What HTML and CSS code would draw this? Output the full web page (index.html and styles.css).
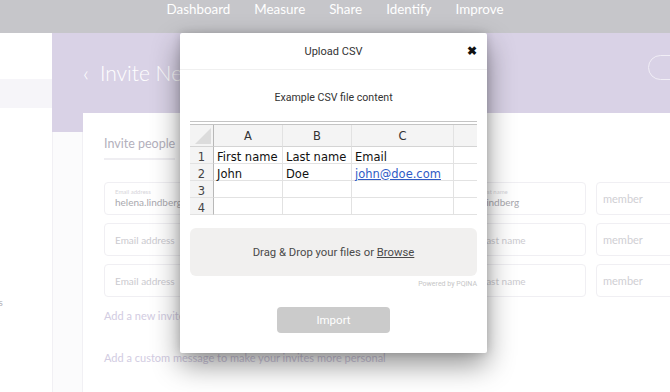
FILE: index.html
```html
<!DOCTYPE html>
<html>
<head>
    <title>Invite people</title>
    <link rel="stylesheet" href="styles.css">
</head>
<body>
    <nav class="topnav">
        <a class="nav-link">Dashboard</a>
        <a class="nav-link">Measure</a>
        <a class="nav-link">Share</a>
        <a class="nav-link">Identify</a>
        <a class="nav-link">Improve</a>
    </nav>
    <div class="layout">
        <aside class="sidebar">
            <div class="side-band"></div>
            <div class="side-item">Invites</div>
        </aside>
        <main class="main">
            <header class="hero">
                <div class="hero-title"><span class="chev">&lsaquo;</span>Invite New People</div>
                <div class="hero-btn"></div>
            </header>
            <div class="body-row">
                <div class="gutter"></div>
                <section class="card">
                    <div class="tabs"><span class="tab">Invite people</span></div>
                    <div class="invite-grid">
                        <div class="field filled"><span class="field-label">Email address</span><span class="field-value">helena.lindberg@ekko.se</span></div>
                        <div class="field filled"><span class="field-label">First name</span><span class="field-value">Helena</span></div>
                        <div class="field filled"><span class="field-label">Last name</span><span class="field-value">Lindberg</span></div>
                        <div class="field role">member</div>

                        <div class="field">Email address</div>
                        <div class="field">First name</div>
                        <div class="field">Last name</div>
                        <div class="field role">member</div>

                        <div class="field">Email address</div>
                        <div class="field">First name</div>
                        <div class="field">Last name</div>
                        <div class="field role">member</div>
                    </div>
                    <a class="text-link add-link">Add a new invite</a>
                    <a class="text-link msg-link">Add a custom message to make your invites more personal</a>
                </section>
            </div>
        </main>
    </div>

    <div class="modal">
        <div class="modal-head">
            <span class="head-spacer"></span>
            <span class="modal-title">Upload CSV</span>
            <span class="modal-close">&#10006;</span>
        </div>
        <div class="modal-body">
            <p class="example-title">Example CSV file content</p>
            <div class="sheet">
                <div class="cell hd corner">
                    <svg width="16" height="16" viewBox="0 0 16 16"><polygon points="16,0 16,16 0,16" fill="#dcdcdc"/></svg>
                </div>
                <div class="cell hd">A</div>
                <div class="cell hd">B</div>
                <div class="cell hd">C</div>
                <div class="cell hd last"></div>

                <div class="cell num">1</div>
                <div class="cell">First name</div>
                <div class="cell">Last name</div>
                <div class="cell">Email</div>
                <div class="cell last"></div>

                <div class="cell num">2</div>
                <div class="cell">John</div>
                <div class="cell">Doe</div>
                <div class="cell"><span class="mail">john@doe.com</span></div>
                <div class="cell last"></div>

                <div class="cell num">3</div>
                <div class="cell"></div>
                <div class="cell"></div>
                <div class="cell"></div>
                <div class="cell last"></div>

                <div class="cell num">4</div>
                <div class="cell"></div>
                <div class="cell"></div>
                <div class="cell"></div>
                <div class="cell last"></div>
            </div>
            <div class="dropzone"><span>Drag &amp; Drop your files or <u>Browse</u></span></div>
            <div class="powered">Powered by PQINA</div>
            <button class="import-btn">Import</button>
        </div>
    </div>
</body>
</html>
```

FILE: styles.css
```css
body {
    margin: 0;
    width: 670px;
    height: 392px;
    overflow: hidden;
    background: #fff;
    font-family: Lato, "Liberation Sans", sans-serif;
    display: flex;
    flex-direction: column;
}
.topnav {
    height: 33px;
    flex: none;
    background: #c6c6ca;
    display: flex;
    justify-content: center;
    align-items: flex-start;
    gap: 24px;
    padding-top: 1px;
    box-sizing: border-box;
}
.nav-link {
    color: #fff;
    font-size: 13.4px;
    line-height: 16px;
}
.layout {
    flex: 1;
    display: flex;
    overflow: hidden;
}
.sidebar {
    width: 52px;
    flex: none;
    background: #fff;
    padding-top: 46px;
}
.side-band {
    height: 29px;
    background: #f6f5f9;
}
.side-item {
    margin-top: 188px;
    margin-left: -26px;
    font-size: 10px;
    color: #b3b2b8;
    white-space: nowrap;
}
.main {
    flex: 1;
    display: flex;
    flex-direction: column;
    overflow: hidden;
}
.hero {
    height: 99px;
    flex: none;
    background: #d9d2e6;
    display: flex;
    align-items: flex-start;
    padding: 28px 0 0 31px;
    box-sizing: border-box;
}
.hero-title {
    color: #fff;
    font-size: 21px;
    line-height: 24px;
    font-weight: 300;
    white-space: nowrap;
}
.chev {
    margin-right: 11px;
    font-size: 22px;
}
.hero-btn {
    margin: -6px -60px 0 auto;
    width: 80px;
    height: 23px;
    border: 1px solid #f1eef6;
    border-radius: 13px;
}
.body-row {
    flex: 1;
    display: flex;
}
.gutter {
    width: 29px;
    flex: none;
    background: #fbfbfc;
    border-left: 1px solid #f1f0f4;
    border-right: 1px solid #f1f0f4;
}
.card {
    flex: 1;
    margin-top: -19px;
    background: #fff;
    padding: 23px 0 0 21px;
    display: flex;
    flex-direction: column;
    align-items: flex-start;
}
.tabs {
    display: flex;
}
.tab {
    font-size: 12.5px;
    line-height: 16px;
    color: #b3b0bc;
    padding-bottom: 6px;
    border-bottom: 2px solid #efeef2;
}
.invite-grid {
    margin-top: 22px;
    display: grid;
    grid-template-columns: 230px 116px 116px 116px;
    grid-auto-rows: 33px;
    column-gap: 10px;
    row-gap: 8px;
}
.field {
    border: 1px solid #f0eff3;
    border-radius: 4px;
    padding-left: 10px;
    display: flex;
    flex-direction: column;
    justify-content: center;
    font-size: 10px;
    color: #cbcacf;
    white-space: nowrap;
    overflow: hidden;
}
.field.role {
    padding-left: 6px;
    font-size: 11px;
    color: #d0cfd4;
}
.field-label {
    font-size: 6px;
    color: #d6d5da;
    line-height: 8px;
}
.field-value {
    font-size: 10px;
    color: #a9a8ae;
    line-height: 13px;
}
.text-link {
    font-size: 11px;
    line-height: 14px;
    color: #d2cce2;
}
.add-link {
    margin-top: 12px;
}
.msg-link {
    margin-top: 28px;
}

/* modal */
.modal {
    position: absolute;
    left: 180px;
    top: 33px;
    width: 307px;
    height: 320px;
    background: #fff;
    border-radius: 2px;
    box-shadow: 0 12px 28px rgba(0,0,0,0.42), 0 0 8px rgba(0,0,0,0.15);
    font-family: Roboto, "Liberation Sans", sans-serif;
    color: #333;
    display: flex;
    flex-direction: column;
}
.modal-head {
    height: 36px;
    flex: none;
    border-bottom: 1px solid #f0f0f0;
    display: flex;
    align-items: center;
    justify-content: space-between;
    padding: 0 10px;
}
.head-spacer {
    width: 10px;
}
.modal-title {
    font-size: 11px;
}
.modal-close {
    width: 10px;
    font-size: 11.5px;
    color: #111;
    font-weight: bold;
}
.modal-body {
    padding: 20px 10px 20px;
    display: flex;
    flex-direction: column;
}
.example-title {
    margin: 0;
    font-size: 10.6px;
    line-height: 16px;
    text-align: center;
}
.sheet {
    margin-top: 15px;
    border-top: 4px double #c4c4c4;
    display: grid;
    grid-template-columns: 24px 69px 69px 102px 23px;
    grid-template-rows: 22px repeat(4, 17px);
    font-family: "DejaVu Sans", sans-serif;
}
.cell {
    border-bottom: 1px solid #e2e2e2;
    border-right: 1px solid #e2e2e2;
    font-size: 11.5px;
    color: #111;
    padding: 3px 0 0 3px;
    display: flex;
    align-items: center;
    white-space: nowrap;
}
.cell.last {
    border-right: none;
}
.cell.hd {
    background: #f4f4f4;
    justify-content: center;
    padding: 0;
    color: #333;
    font-size: 11.5px;
    border-bottom-color: #d4d4d4;
}
.cell.corner {
    justify-content: flex-end;
    align-items: flex-end;
    padding: 0 2px 2px 0;
    border-right-color: #b8b8b8;
}
.cell.num {
    background: #f4f4f4;
    justify-content: center;
    padding: 3px 0 0;
    color: #444;
    border-right-color: #b8b8b8;
}
.mail {
    color: #2f5bc6;
    text-decoration: underline;
}
.dropzone {
    margin-top: 13px;
    height: 48px;
    background: #f1f0ef;
    border-radius: 6px;
    display: flex;
    align-items: center;
    justify-content: center;
    font-size: 11.3px;
    color: #4a4a4a;
}
.powered {
    margin-top: 4px;
    font-size: 7px;
    line-height: 9px;
    color: #c6c6c6;
    text-align: right;
}
.import-btn {
    margin: 18px auto 0;
    width: 113px;
    height: 26px;
    border: none;
    border-radius: 4px;
    background: #cbcbcb;
    color: #fff;
    font-family: Roboto, "Liberation Sans", sans-serif;
    font-size: 11.5px;
}
```
